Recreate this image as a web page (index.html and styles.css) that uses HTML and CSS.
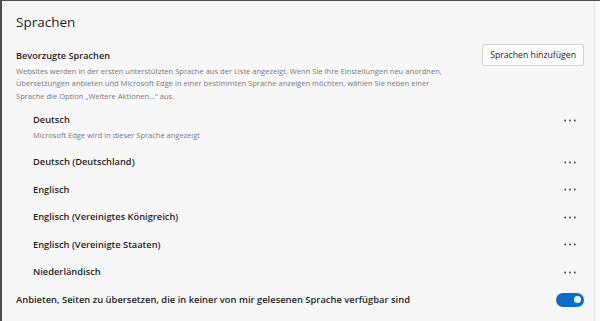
FILE: index.html
```html
<!DOCTYPE html>
<html lang="de">
<head>
    <meta charset="UTF-8">
    <meta name="viewport" content="width=device-width, initial-scale=1.0">
    <title>Sprachen</title>
    <link rel="stylesheet" href="styles.css">
</head>
<body>
    <div class="page">
        <h1 class="title">Sprachen</h1>

        <div class="section-head">
            <h2>Bevorzugte Sprachen</h2>
            <button class="add-btn">Sprachen hinzufügen</button>
        </div>
        <p class="desc">
            Websites werden in der ersten unterstützten Sprache aus der Liste angezeigt. Wenn Sie Ihre Einstellungen neu anordnen,<br>
            Übersetzungen anbieten und Microsoft Edge in einer bestimmten Sprache anzeigen möchten, wählen Sie neben einer<br>
            Sprache die Option „Weitere Aktionen...“ aus.
        </p>

        <ul class="lang-list">
            <li class="lang">
                <div>
                    <div class="lang-name">Deutsch</div>
                    <div class="lang-note">Microsoft Edge wird in dieser Sprache angezeigt</div>
                </div>
                <button class="more" aria-label="Weitere Aktionen">
                    <svg width="12" height="3" viewBox="0 0 12 3"><circle cx="1.2" cy="1.5" r="0.9"/><circle cx="6" cy="1.5" r="0.9"/><circle cx="10.8" cy="1.5" r="0.9"/></svg>
                </button>
            </li>
            <li class="lang">
                <div class="lang-name">Deutsch (Deutschland)</div>
                <button class="more" aria-label="Weitere Aktionen">
                    <svg width="12" height="3" viewBox="0 0 12 3"><circle cx="1.2" cy="1.5" r="0.9"/><circle cx="6" cy="1.5" r="0.9"/><circle cx="10.8" cy="1.5" r="0.9"/></svg>
                </button>
            </li>
            <li class="lang">
                <div class="lang-name">Englisch</div>
                <button class="more" aria-label="Weitere Aktionen">
                    <svg width="12" height="3" viewBox="0 0 12 3"><circle cx="1.2" cy="1.5" r="0.9"/><circle cx="6" cy="1.5" r="0.9"/><circle cx="10.8" cy="1.5" r="0.9"/></svg>
                </button>
            </li>
            <li class="lang">
                <div class="lang-name">Englisch (Vereinigtes Königreich)</div>
                <button class="more" aria-label="Weitere Aktionen">
                    <svg width="12" height="3" viewBox="0 0 12 3"><circle cx="1.2" cy="1.5" r="0.9"/><circle cx="6" cy="1.5" r="0.9"/><circle cx="10.8" cy="1.5" r="0.9"/></svg>
                </button>
            </li>
            <li class="lang">
                <div class="lang-name">Englisch (Vereinigte Staaten)</div>
                <button class="more" aria-label="Weitere Aktionen">
                    <svg width="12" height="3" viewBox="0 0 12 3"><circle cx="1.2" cy="1.5" r="0.9"/><circle cx="6" cy="1.5" r="0.9"/><circle cx="10.8" cy="1.5" r="0.9"/></svg>
                </button>
            </li>
            <li class="lang">
                <div class="lang-name">Niederländisch</div>
                <button class="more" aria-label="Weitere Aktionen">
                    <svg width="12" height="3" viewBox="0 0 12 3"><circle cx="1.2" cy="1.5" r="0.9"/><circle cx="6" cy="1.5" r="0.9"/><circle cx="10.8" cy="1.5" r="0.9"/></svg>
                </button>
            </li>
        </ul>

        <div class="setting">
            <span class="setting-label">Anbieten, Seiten zu übersetzen, die in keiner von mir gelesenen Sprache verfügbar sind</span>
            <span class="toggle on"><span class="knob"></span></span>
        </div>
    </div>
</body>
</html>
```

FILE: styles.css
```css
html, body {
    height: 100%;
}
body {
    margin: 0;
    background-color: #fbfbfb;
    border-top: 1px solid #4d4d4d;
    border-left: 2px solid #4d4d4d;
    font-family: "Open Sans", Arial, sans-serif;
    color: #1f1f1f;
    overflow: hidden;
}
.page {
    width: 568px;
    height: 100%;
    padding: 11px 10px 0 14px;
    background-color: #f7f7f7;
    border-right: 1px solid #e4e4e4;
}
.title {
    margin: 0;
    font-size: 13.5px;
    font-weight: 400;
    line-height: 20px;
}
.section-head {
    display: flex;
    align-items: center;
    justify-content: space-between;
    margin-top: 12px;
    height: 22px;
}
h2 {
    margin: 0;
    font-size: 9.2px;
    font-weight: 600;
    line-height: 14px;
    padding-top: 1px;
}
.add-btn {
    height: 22px;
    padding: 0 7px;
    border: 1px solid #d2d2d2;
    border-radius: 2px;
    background-color: #fcfcfc;
    font-family: inherit;
    font-size: 8.7px;
    color: #262626;
}
.desc {
    margin: -1px 0 0;
    font-size: 7.55px;
    line-height: 12.4px;
    color: #7a7a7a;
    white-space: nowrap;
}
.lang-list {
    list-style: none;
    margin: 4px 0 0;
    padding: 0 0 0 17px;
}
.lang {
    display: flex;
    align-items: center;
    justify-content: space-between;
    min-height: 27.6px;
}
.lang:first-child {
    padding: 7px 0 7px;
    align-items: flex-start;
}
.lang-name {
    font-size: 9.3px;
    font-weight: 600;
    line-height: 14px;
}
.lang-note {
    margin-top: 2px;
    font-size: 7.5px;
    line-height: 12px;
    color: #7a7a7a;
}
.more {
    width: 24px;
    height: 14px;
    padding: 0;
    margin-right: 2px;
    border: none;
    background: none;
    display: flex;
    align-items: center;
    justify-content: center;
    fill: #3a3a3a;
}
.setting {
    display: flex;
    align-items: center;
    justify-content: space-between;
    height: 27px;
}
.setting-label {
    font-size: 9.4px;
    font-weight: 600;
}
.toggle {
    position: relative;
    width: 28px;
    height: 14px;
    border-radius: 7px;
    background-color: #0b6cd0;
}
.knob {
    position: absolute;
    top: 3.5px;
    right: 3.5px;
    width: 7px;
    height: 7px;
    border-radius: 50%;
    background-color: #ffffff;
}
```
